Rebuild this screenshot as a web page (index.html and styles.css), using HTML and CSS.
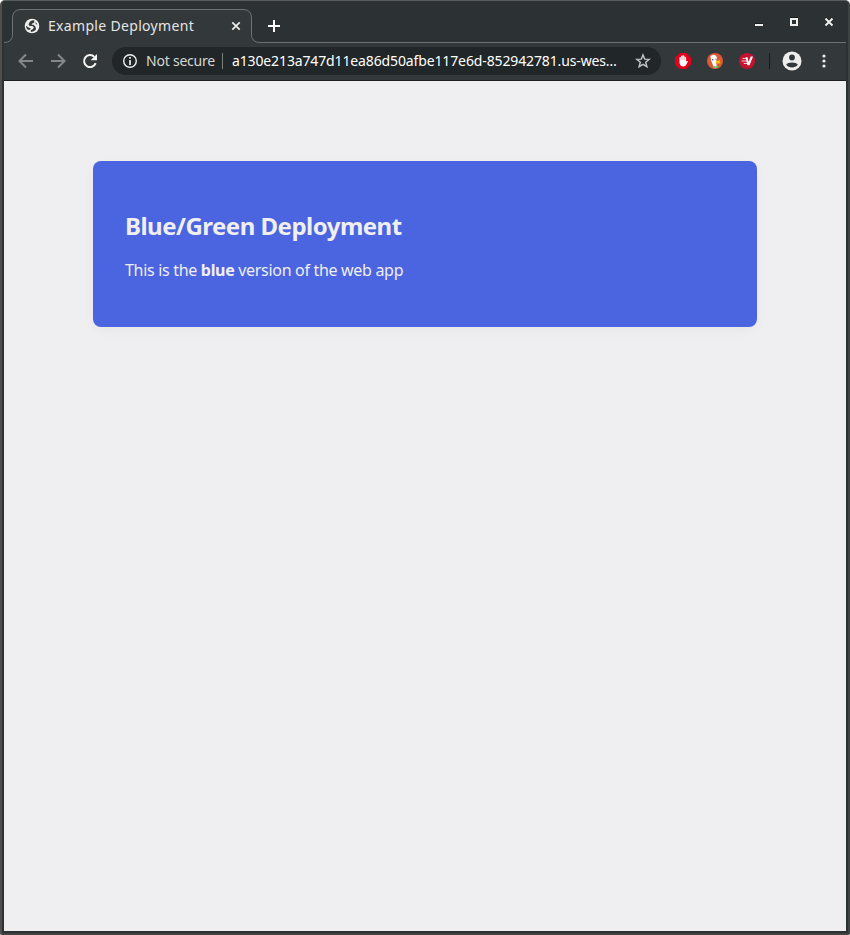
FILE: index.html
```html
<!DOCTYPE html>
<html lang="en">
<head>
<meta charset="utf-8">
<title>Example Deployment</title>
<link rel="stylesheet" href="styles.css">
</head>
<body>
<div class="window">
  <header class="tabstrip">
    <svg class="tab-shape" width="842" height="40" viewBox="4 3 842 40"><path class="tab-fill" d="M4 42.500Q12.500 42.500 12.500 34V18Q12.500 9.500 21 9.500H243Q251.500 9.500 251.500 18V34Q251.500 42.500 260 42.500H846V44H4Z"/></svg>
    <div class="tab">
      <svg width="16" height="16" viewBox="0 0 16 16"><circle cx="8" cy="8" r="7.300" fill="#eeeeec"/><path d="M8.500 2.200 6 3.500 4.500 6.300 5.500 8H8.500L9.800 9.200 9 11 6.800 12.200V14L9.800 13.300 12 11.500 11.500 8.800 9.500 6.800H7.500L8.300 5.500 10.300 4.500V2.500ZM2 7.700 4.500 9.500 6.700 10.300 6 11.700H3.800L2.400 10ZM11.500 4 13.500 6.500 11.800 6.300Z" fill="#33393b"/></svg>
      <span class="tab-title">Example Deployment</span>
      <svg class="tab-close" width="10" height="10" viewBox="0 0 10 10"><path d="M1.300 1.300 8.700 8.700M8.700 1.300 1.300 8.700" stroke="#eeeeec" stroke-width="1.700"/></svg>
    </div>
    <svg class="new-tab" width="12" height="12" viewBox="0 0 12 12"><path d="M6 0V12M0 6H12" stroke="#fff" stroke-width="2"/></svg>
    <div class="controls">
      <svg width="8" height="10" viewBox="0 0 8 10"><path d="M0 6.500H8" stroke="#171a1b"/><path d="M0 8H8" stroke="#eeeeec" stroke-width="2"/></svg>
      <svg width="8" height="10" viewBox="0 0 8 10"><path d="M0 .5H8M2 7.500H6" stroke="#171a1b"/><rect x="1" y="2" width="6" height="6" fill="none" stroke="#eeeeec" stroke-width="2"/></svg>
      <svg width="8" height="10" viewBox="0 0 8 10"><path d="M.5 .5 7.500 7.500M7.500 .5 .5 7.500" stroke="#171a1b" stroke-width="2"/><path d="M.5 1.500 7.500 8.500M7.500 1.500 .5 8.500" stroke="#eeeeec" stroke-width="2"/></svg>
    </div>
  </header>
  <div class="toolbar">
    <svg class="nav" width="16" height="16" viewBox="0 0 16 16"><path d="M15 8H2M8 1.500 1.500 8 8 14.500" fill="none" stroke="#858889" stroke-width="2"/></svg>
    <svg class="nav" width="16" height="16" viewBox="0 0 16 16"><path d="M1 8H14M8 1.500 14.500 8 8 14.500" fill="none" stroke="#858889" stroke-width="2"/></svg>
    <svg class="nav" width="16" height="16" viewBox="0 0 16 16"><path d="M13.700 10.200A6 6 0 1 1 12.400 3.900" fill="none" stroke="#f4f4f3" stroke-width="2"/><path d="M15 1V7.300H8.700Z" fill="#f4f4f3"/></svg>
    <div class="address">
      <svg width="16" height="16" viewBox="0 0 16 16"><circle cx="8" cy="8" r="6.300" fill="none" stroke="#eeeeec" stroke-width="1.400"/><path d="M8 4V5.700M8 7V12" stroke="#eeeeec" stroke-width="1.700"/></svg>
      <span class="security">Not secure</span>
      <span class="divider"></span>
      <span class="url">a130e213a747d11ea86d50afbe117e6d-852942781.us-wes…</span>
      <svg class="star" width="16" height="16" viewBox="0 0 16 16"><path d="M8 1.900 9.700 6.100 14.200 6.400 10.700 9.300 11.900 13.700 8 11.300 4.100 13.700 5.300 9.300 1.800 6.400 6.300 6.100Z" fill="none" stroke="#c4c6c6" stroke-width="1.400"/></svg>
    </div>
    <div class="extensions">
      <svg width="16" height="16" viewBox="0 0 16 16"><path d="M4.700 0H11.300L16 4.700V11.300L11.300 16H4.700L0 11.300V4.700Z" fill="#e2001a"/><path d="M4.500 10V4.600Q5.300 3.600 6 4.600V3Q7 2 7.700 2.700 8.500 1.600 9.400 2.700V4Q10.500 3.300 11.100 4.300V8.500L12 8Q13.200 7.600 12.900 8.500L10.800 12.400Q8 14.500 5.600 12.400Z" fill="#fff"/><path d="M6.200 4V7M7.900 3V7M9.600 4V7" stroke="#e2001a" stroke-width=".3"/></svg>
      <svg width="16" height="16" viewBox="0 0 16 16"><circle cx="8" cy="8" r="8" fill="#de5833"/><path d="M3.500 3 6 1.700Q9.800 2 10 5.500L9 9 10 14.500 7 15.300 5.500 11 4 7.500Z" fill="#fff"/><circle cx="5.700" cy="6.800" r=".8" fill="#34508a"/><circle cx="9" cy="6.200" r=".6" fill="#34508a"/><path d="M8.700 8.300 13.500 7 12.500 8.700 14 10.300 9 10.500Z" fill="#fdc20a"/><path d="M6.500 13 9 13.600 11.500 12.400V15L8.500 14.500 6.500 15.500Z" fill="#5eb145"/></svg>
      <svg width="16" height="16" viewBox="0 0 16 16"><circle cx="8" cy="8" r="8" fill="#c4122f"/><path d="M3.500 5.500H7.300M2.500 8H7.500M4.700 10.500H8" stroke="#f4cbd1" stroke-width="1.200"/><path d="M6.500 4.300H8.600L9.500 9 11.700 3.600H14L10.500 12.200H8.400Z" fill="#fff"/></svg>
    </div>
    <span class="toolbar-line"></span>
    <svg class="profile" width="20" height="20" viewBox="0 0 20 20"><circle cx="10" cy="10" r="9.500" fill="#eeeeec"/><circle cx="10" cy="6.500" r="2.900" fill="#33393b"/><path d="M4.200 13.800C5.500 10.600 14.500 10.600 15.800 13.800 13.500 17.300 6.500 17.300 4.200 13.800Z" fill="#33393b"/></svg>
    <svg class="more" width="4" height="14" viewBox="0 0 4 14"><g fill="#eeeeec"><circle cx="2" cy="2" r="1.600"/><circle cx="2" cy="7" r="1.600"/><circle cx="2" cy="12" r="1.600"/></g></svg>
  </div>
  <main class="page">
    <section class="card">
      <h1>Blue/Green Deployment</h1>
      <p>This is the <b>blue</b> version of the web app</p>
    </section>
  </main>
</div>
</body>
</html>
```
FILE: styles.css
```css
* { box-sizing: border-box; }
body { margin: 0; background: #fff; font-family: "Noto Sans", "Open Sans", sans-serif; }
svg { display: block; flex: none; }
.window {
  height: 935px;
  display: flex;
  flex-direction: column;
  border: 2px solid #2e3436;
  border-width: 1px 2px 2px;
  padding: 2px;
  border-color: #5b5d5d #3d4243 #45413f #504f4d;
  border-radius: 5px 5px 2px 2px;
  background: #2c3133;
}
.tabstrip { height: 40px; flex: none; position: relative; display: flex; align-items: flex-start; }
.tab-shape { position: absolute; inset: 0; }
.tab-fill { fill: #33393b; stroke: #6c7173; }
.tab { position: relative; width: 240px; height: 34px; margin: 6px 0 0 8px; padding: 0 11px 0 12px; display: flex; align-items: center; }
.tab-title { margin-left: 8px; font-size: 14px; line-height: 20px; color: #e4e4e2; letter-spacing: .32px; white-space: nowrap; }
.tab-close { margin-left: auto; }
.new-tab { position: relative; margin: 17px 0 0 16px; }
.controls { position: relative; margin: 14px 13px 0 auto; display: flex; gap: 27px; }
.toolbar { height: 38px; flex: none; background: #33393b; border-bottom: 1px solid #1b1f20; display: flex; align-items: center; padding: 0 0 1px 14px; }
.nav { margin-right: 16px; }
.address { width: 549px; height: 28px; margin-left: -2px; padding: 0 10px; border-radius: 14px; background: #212628; display: flex; align-items: center; white-space: nowrap; font-size: 14px; line-height: 20px; }
.security { width: 69px; margin-left: 8px; color: #d5d6d5; letter-spacing: -.22px; }
.divider { width: 1px; height: 16px; margin: 0 9px 0 7px; background: #7a7d7e; }
.url { color: #fff; letter-spacing: -.13px; }
.star { margin-left: auto; }
.extensions { display: flex; gap: 16px; margin-left: 14px; }
.toolbar-line { width: 1px; height: 16px; margin: 0 12px 0 14px; background: #17191a; }
.profile { margin-right: 20px; }
.page { flex: 1; padding: 80px 89px; background: #efeff1; }
.card { height: 166px; padding: 48px 32px; border-radius: 8px; background: #4b64df; color: #efeff1; box-shadow: 0 4px 12px rgba(0, 0, 0, .035); white-space: nowrap; }
h1 { margin: 0; font-size: 24px; line-height: 34px; font-weight: 700; letter-spacing: -.51px; }
p { margin: 14px 0 0; font-size: 16px; line-height: 26px; letter-spacing: -.31px; }
```
